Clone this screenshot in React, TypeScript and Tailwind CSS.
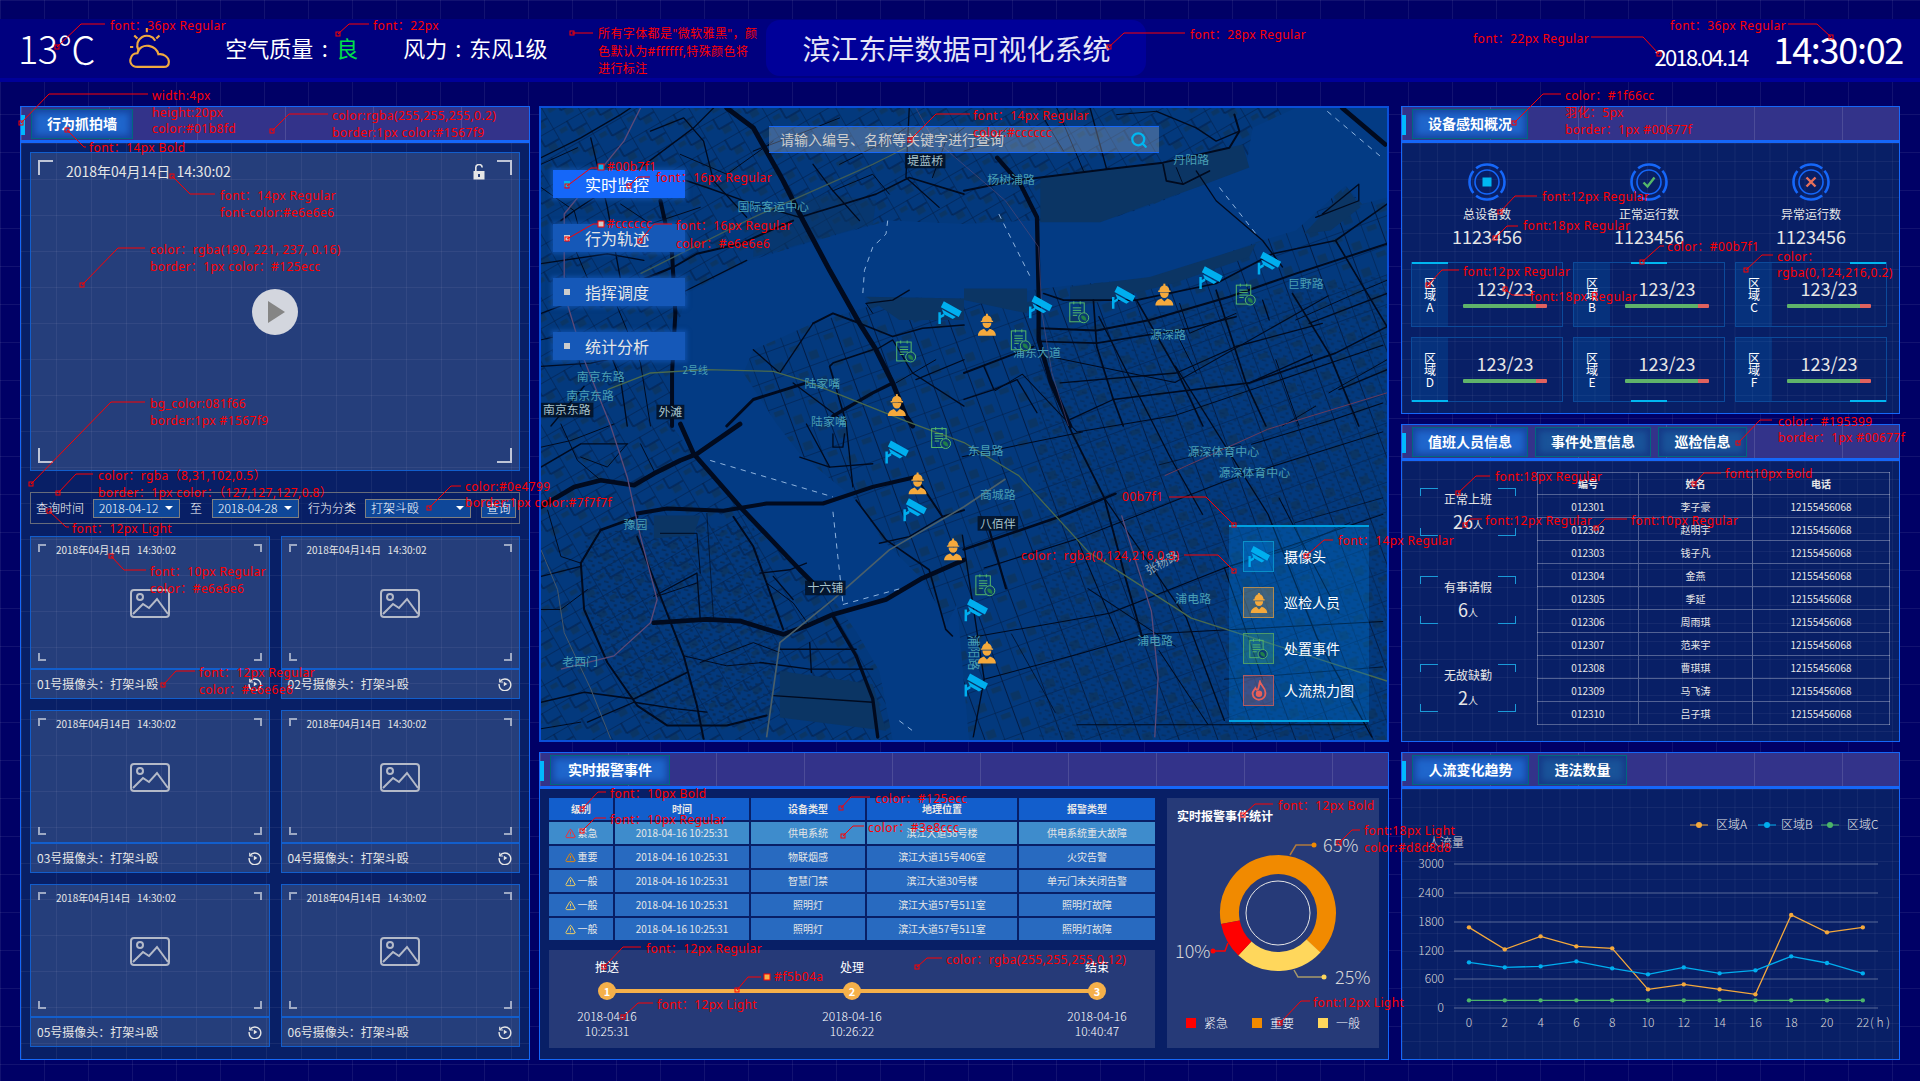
import type { ReactNode } from 'react'
import { Search, TriangleAlert } from 'lucide-react'

// ---- annotation overlay data (page coordinates)
type Note = [number, number, string]
const notes: Note[] = [
  [110, 26, 'font：36px Regular'],
  [373, 26, 'font：22px'],
  [598, 34, '所有字体都是"微软雅黑"，颜'],
  [598, 52, '色默认为#ffffff,特殊颜色将'],
  [598, 69, '进行标注'],
  [152, 96, 'width:4px'],
  [152, 113, 'height:20px'],
  [152, 129, 'color:#01b8fd'],
  [332, 116, 'color:rgba(255,255,255,0.2)'],
  [332, 133, 'border:1px  color:#1567f9'],
  [89, 148, 'font：14px Bold'],
  [220, 196, 'font：14px Regular'],
  [220, 213, 'font-color:#e6e6e6'],
  [150, 250, 'color：rgba(190, 221, 237, 0.16)'],
  [150, 267, 'border：1px  color：#125ecc'],
  [150, 404, 'bg_color:081f66'],
  [150, 421, 'border:1px #1567f9'],
  [98, 476, 'color：rgba（8,31,102,0.5）'],
  [98, 493, 'border：1px color：（127,127,127,0.8）'],
  [72, 529, 'font：12px Light'],
  [465, 487, 'color:#0e4799'],
  [465, 503, 'border:1px color:#7f7f7f'],
  [150, 572, 'font：10px Regular'],
  [150, 589, 'color：#e6e6e6'],
  [199, 673, 'font：12px Regular'],
  [199, 690, 'color：#e6e6e6'],
  [607, 167, '#00b7f1'],
  [656, 178, 'font：16px Regular'],
  [607, 224, '#cccccc'],
  [676, 226, 'font：16px Regular'],
  [676, 244, 'color：#e6e6e6'],
  [973, 116, 'font：14px Regular'],
  [973, 133, 'color:#cccccc'],
  [1190, 35, 'font：28px Regular'],
  [1473, 39, 'font：22px Regular'],
  [1670, 26, 'font：36px Regular'],
  [1565, 96, 'color：#1f66cc'],
  [1565, 113, '羽化：5px'],
  [1565, 130, 'border：1px #00677f'],
  [1542, 197, 'font:12px Regular'],
  [1523, 226, 'font:18px Regular'],
  [1667, 247, 'color：#00b7f1'],
  [1777, 257, 'color：'],
  [1777, 273, 'rgba(0,124,216,0.2)'],
  [1463, 272, 'font:12px Regular'],
  [1530, 297, 'font:18px Regular'],
  [1778, 422, 'color：#195399'],
  [1778, 438, 'border：1px #00677f'],
  [1495, 477, 'font:18px Regular'],
  [1725, 474, 'font:10px Bold'],
  [1485, 521, 'font:12px Regular'],
  [1631, 521, 'font:10px Regular'],
  [1122, 497, '00b7f1'],
  [1021, 556, 'color：rgba(0,124,216,0.3)'],
  [1338, 541, 'font：14px Regular'],
  [610, 794, 'font：10px Bold'],
  [610, 820, 'font：10px Regular'],
  [875, 799, 'color：#125ecc'],
  [868, 828, 'color：#3e8ccc'],
  [646, 949, 'font：12px Regular'],
  [774, 977, '#f5b04a'],
  [946, 960, 'color：rgba(255,255,255,0.12)'],
  [657, 1005, 'font：12px Light'],
  [1278, 806, 'font：12px Bold'],
  [1364, 831, 'font:18px Light'],
  [1364, 848, 'color:#d8d8d8'],
  [1313, 1003, 'font:12px Light'],
]

// first point is the little square, the rest is the leader line
const leaders: number[][] = [
  [57, 47, 81, 24, 105, 24],
  [338, 34, 349, 24, 369, 24],
  [572, 33, 593, 33],
  [21, 123, 49, 94, 148, 94],
  [272, 131, 289, 114, 328, 114],
  [67, 130, 84, 147, 86, 147],
  [172, 176, 190, 194, 215, 194],
  [82, 285, 118, 248, 145, 248],
  [31, 484, 111, 402, 145, 402],
  [58, 493, 76, 474, 93, 474],
  [49, 511, 66, 527, 69, 527],
  [429, 508, 451, 486, 461, 486],
  [111, 556, 124, 570, 146, 570],
  [163, 685, 176, 671, 195, 671],
  [567, 186, 591, 168, 597, 168],
  [629, 186, 638, 177, 650, 177],
  [567, 239, 593, 224, 598, 224],
  [640, 241, 654, 224, 672, 224],
  [910, 140, 936, 114, 970, 114],
  [1109, 47, 1124, 33, 1185, 33],
  [1659, 54, 1643, 37, 1591, 37],
  [1831, 37, 1817, 24, 1788, 24],
  [1514, 123, 1543, 94, 1561, 94],
  [1500, 212, 1515, 196, 1537, 196],
  [1495, 238, 1507, 226, 1518, 226],
  [1642, 262, 1660, 246, 1664, 246],
  [1746, 270, 1762, 255, 1773, 255],
  [1428, 285, 1442, 270, 1459, 270],
  [1505, 289, 1512, 295, 1530, 295],
  [1738, 443, 1760, 420, 1772, 420],
  [1458, 493, 1476, 476, 1490, 476],
  [1465, 525, 1470, 519, 1482, 519],
  [1596, 528, 1605, 519, 1627, 519],
  [1694, 484, 1704, 473, 1721, 473],
  [1234, 525, 1206, 497, 1169, 497],
  [1234, 571, 1218, 555, 1184, 555],
  [1306, 556, 1324, 540, 1333, 540],
  [582, 809, 598, 792, 606, 792],
  [582, 831, 595, 818, 606, 818],
  [841, 808, 851, 797, 870, 797],
  [843, 836, 853, 826, 864, 826],
  [604, 967, 623, 947, 641, 947],
  [737, 990, 748, 977, 761, 977],
  [917, 967, 927, 958, 942, 958],
  [623, 1017, 638, 1003, 653, 1003],
  [1243, 815, 1255, 804, 1273, 804],
  [1339, 843, 1352, 830, 1360, 830],
  [1280, 1023, 1301, 1001, 1310, 1001],
]

function Annotations() {
  return (
    <div className="absolute inset-0 pointer-events-none font-['Noto_Sans','Noto_Sans_CJK_SC',sans-serif] text-[12px] tracking-[0.4px] text-[#ff0000] whitespace-nowrap">
      <svg className="absolute inset-0" width="1920" height="1081" fill="none" stroke="#ff0000">
        {leaders.map((l, i) => {
          const pts = []
          for (let k = 0; k < l.length; k += 2) pts.push(`${l[k]},${l[k + 1]}`)
          return (
            <g key={i}>
              <rect x={l[0] - 2} y={l[1] - 2} width="4" height="4" />
              <polyline points={pts.join(' ')} />
            </g>
          )
        })}
        <rect x="598" y="164" width="6" height="6" fill="#00b7f1" />
        <rect x="598" y="221" width="6" height="6" fill="#cccccc" />
        <rect x="764" y="974" width="6" height="6" fill="#f5b04a" />
      </svg>
      {notes.map(([x, y, t]) => (
        <span key={`${x}-${y}`} className="absolute -translate-y-1/2 leading-none" style={{ left: x, top: y }}>
          {t}
        </span>
      ))}
    </div>
  )
}

// ---- small pieces
function Tab({ w, active, children }: { w: string; active?: boolean; children: ReactNode }) {
  return (
    <div
      className={`${w} h-[30px] flex items-center justify-center border border-[#00677f] text-[14px] font-bold ${
        active
          ? 'bg-[#1f66cc] shadow-[inset_0_0_6px_3px_rgba(20,60,150,0.8)]'
          : 'bg-[#195399] shadow-[inset_0_0_6px_3px_rgba(20,50,130,0.8)]'
      }`}
    >
      {children}
    </div>
  )
}

function Panel({ head, className, fine, children }: { head: ReactNode; className: string; fine?: boolean; children: ReactNode }) {
  return (
    <section className={`${className} flex flex-col border border-[#1567f9] bg-[#081f66]`}>
      <header className="relative h-[36px] shrink-0 flex items-center gap-[7px] pl-[10px] bg-[#33338a] border-b-[3px] border-[#1567f9] bg-[linear-gradient(90deg,rgba(255,255,255,0.12)_1px,transparent_1px)] bg-[size:88px_100%]">
        <span className="absolute left-0 top-[8px] w-[4px] h-[20px] bg-[#01b8fd]" />
        {head}
      </header>
      <div
        className={`flex-1 min-h-0 ${
          fine
            ? 'bg-[linear-gradient(rgba(255,255,255,0.05)_1px,transparent_1px),linear-gradient(90deg,rgba(255,255,255,0.05)_1px,transparent_1px)] bg-[size:17.5px_18px]'
            : ''
        }`}
      >
        {children}
      </div>
    </section>
  )
}

function Corners({ size, color }: { size: string; color: string }) {
  const s = `absolute ${size} ${color}`
  return (
    <>
      <span className={`${s} left-[7px] top-[7px] border-l-2 border-t-2`} />
      <span className={`${s} right-[7px] top-[7px] border-r-2 border-t-2`} />
      <span className={`${s} left-[7px] bottom-[7px] border-l-2 border-b-2`} />
      <span className={`${s} right-[7px] bottom-[7px] border-r-2 border-b-2`} />
    </>
  )
}

function CameraCard({ name }: { name: string }) {
  return (
    <div className="h-[163px] flex flex-col border border-[#125ecc] bg-[rgba(190,221,237,0.16)]">
      <div className="relative flex-1 flex flex-col items-center">
        <Corners size="w-[8px] h-[8px]" color="border-[rgba(255,255,255,0.55)]" />
        <div className="self-start ml-[25px] mt-[5px] text-[10px] leading-[15px] text-[#e6e6e6] whitespace-pre">2018年04月14日   14:30:02</div>
        <svg className="mt-[32px]" width="40" height="30" viewBox="0 0 40 30" fill="none" stroke="#b4bac8" strokeWidth="2">
          <rect x="1" y="1" width="38" height="27" rx="3" />
          <circle cx="10" cy="8" r="3" />
          <path d="M3 25 L13 15 L19 19 L27 10 L38 25" />
        </svg>
      </div>
      <div className="h-[30px] shrink-0 flex items-center justify-between pl-[6px] pr-[7px] border-t-2 border-[#125ecc] text-[12px] text-[#e6e6e6]">
        <span>{name}号摄像头：打架斗殴</span>
        <svg width="14" height="14" viewBox="0 0 24 24" fill="none" stroke="#e6e6e6" strokeWidth="2.4">
          <path d="M3.5 8 A10 10 0 1 1 2 12" />
          <path d="M3 3 V8.5 H8.5" strokeWidth="2" />
          <path d="M10 8 L16 12 L10 16 Z" fill="#e6e6e6" stroke="none" />
        </svg>
      </div>
    </div>
  )
}

function Select({ w, children }: { w: string; children: ReactNode }) {
  return (
    <div className={`${w} h-[19px] flex items-center justify-between pl-[5px] pr-[6px] bg-[#0e4799] border border-[#7f7f7f] text-[12px] font-light`}>
      <span>{children}</span>
      <span className="w-0 h-0 border-x-[4px] border-x-transparent border-t-[4px] border-t-white" />
    </div>
  )
}

function LeftColumn() {
  return (
    <Panel className="w-[510px] h-[954px]" head={<Tab w="w-[102px]" active>行为抓拍墙</Tab>}>
      <div className="px-[9px] pt-[9px] h-full bg-[linear-gradient(rgba(255,255,255,0.06)_1px,transparent_1px),linear-gradient(90deg,rgba(255,255,255,0.06)_1px,transparent_1px)] bg-[size:35px_36px]">
        <div className="relative h-[319px] border border-[#125ecc] bg-[rgba(190,221,237,0.16)] flex items-center justify-center">
          <Corners size="w-[15px] h-[15px]" color="border-[rgba(255,255,255,0.7)]" />
          <div className="absolute left-[35px] top-[8px] text-[14px] leading-[20px] text-[#e6e6e6] whitespace-pre">2018年04月14日  14:30:02</div>
          <svg className="absolute right-[34px] top-[11px]" width="12" height="16" viewBox="0 0 12 16" fill="#e6e6e6">
            <path d="M2 7 V4 a4 4 0 0 1 8 -0.5 H8.4 a2.4 2.4 0 0 0 -4.8 0.5 V7 Z" />
            <path fillRule="evenodd" d="M0.5 7 H11.5 V15.5 H0.5 Z M5 10 V13 H7 V10 Z" />
          </svg>
          <span className="w-[46px] h-[46px] rounded-full bg-[#d3d6de] flex items-center justify-center">
            <span className="ml-[3px] w-0 h-0 border-y-[11px] border-y-transparent border-l-[17px] border-l-[#858585]" />
          </span>
        </div>
        <div className="mt-[21px] h-[32px] flex items-center gap-[9px] pl-[5px] border border-[rgba(127,127,127,0.8)] bg-[rgba(8,31,102,0.5)] text-[12px] font-light">
          <span>查询时间</span>
          <Select w="w-[87px]">2018-04-12</Select>
          <span className="mx-[1px]">至</span>
          <Select w="w-[87px]">2018-04-28</Select>
          <span>行为分类</span>
          <Select w="w-[106px]">打架斗殴</Select>
          <span className="ml-[1px] w-[35px] h-[19px] flex items-center justify-center bg-[#0e4799] border border-[#7f7f7f]">查询</span>
        </div>
        <div className="mt-[12px] grid grid-cols-2 gap-x-[11px] gap-y-[11px]">
          {['01', '02', '03', '04', '05', '06'].map((n) => (
            <CameraCard key={n} name={n} />
          ))}
        </div>
      </div>
    </Panel>
  )
}

// ---- map drawing
const ROAD = '#010a1e'
type Line = [string, number]

const roadsTL: Line[] = [
  ['560,0 640,60 730,220 790,340 870,490 960,650 1010,730 1060,830 1100,930 1120,960', 15],
  ['360,280 395,440 405,620 395,800 395,960', 12],
  ['300,520 400,480 470,440 600,410 760,340', 6],
  ['0,150 120,90 240,20 270,0', 4],
  ['0,170 110,120', 3],
  ['150,90 200,300 240,520', 4],
  ['60,340 100,310 300,180 460,60 520,0', 4],
  ['330,70 430,30 490,100 520,220 620,330', 4],
  ['380,200 500,240 640,290 780,330', 4],
  ['780,330 1010,260 1110,210 1275,260', 5],
  ['820,170 880,250 960,340', 4],
  ['1110,0 1100,210 1200,300', 4],
  ['0,470 200,440 310,460', 4],
  ['0,620 160,560 420,560 620,460', 4],
  ['0,780 150,770 390,720', 4],
  ['820,650 880,620 960,650', 6],
  ['640,730 720,800 820,650', 4],
  ['1000,730 880,770 870,780 920,950', 5],
  ['1275,655 1150,665 1060,690 960,650', 5],
  ['1010,730 1060,700 1120,800 1275,900', 4],
  ['980,590 1060,580 1110,550', 4],
  ['980,590 1000,620', 3],
  ['1130,820 1275,760', 4],
  ['1070,830 1190,760', 3],
  ['880,930 1000,860 1060,830', 10],
  ['560,960 640,880 800,830', 9],
  ['760,830 920,950', 4],
  ['30,960 130,840', 4],
  ['260,960 240,820 200,720', 4],
  ['420,140 560,200 700,100', 3],
  ['240,290 330,350 480,300', 3],
  ['100,420 160,560', 3],
  ['640,130 800,70 900,30', 3],
  ['900,170 1040,100 1100,60', 3],
  ['1180,210 1220,100 1275,60', 3],
  ['880,250 1000,200 1050,260', 3],
  ['0,240 100,310 130,420', 3],
  ['0,700 90,680 120,780', 3],
  ['230,600 300,770 330,960', 3],
]
const roadsTR: Line[] = [
  ['100,150 170,230 220,330 225,560 225,700 260,820 320,960', 13],
  ['0,250 150,220 430,185 600,165 800,120 830,70 815,20', 6],
  ['230,665 400,672 560,640 800,570 1000,500 1275,410', 6],
  ['230,705 400,710 680,665 820,630', 5],
  ['240,560 300,580 520,580 760,530 930,440 1120,400 1275,290', 5],
  ['390,580 400,720 450,880 480,960', 5],
  ['520,580 640,790 720,960', 5],
  ['760,550 850,830 910,960', 5],
  ['990,560 1100,740 1190,960', 5],
  ['1120,400 1275,660', 5],
  ['700,190 760,280 900,400 960,480', 4],
  ['1140,0 1270,110', 14],
  ['290,830 640,800 820,720 1080,650', 4],
  ['0,800 210,720', 6],
  ['450,880 860,830 1120,740 1275,660', 5],
  ['320,940 450,880', 4],
  ['860,830 1050,745', 4],
  ['1040,650 1275,560', 4],
  ['580,10 700,60 760,100 830,70', 4],
  ['600,170 610,220 660,230 740,190', 5],
  ['660,230 640,180', 3],
  ['650,590 680,680 820,620', 3],
  ['900,580 920,640', 4],
  ['60,780 90,850 160,820 220,920', 4],
  ['0,880 90,850', 4],
  ['960,960 1060,900', 3],
  ['1130,850 1275,790', 4],
  ['380,0 430,185', 4],
  ['280,0 360,190', 3],
  ['1060,330 1190,280 1190,230 1080,320', 4],
  ['0,130 90,100 130,60', 3],
  ['460,20 580,10', 3],
  ['240,30 300,130', 3],
  ['1000,640 1180,560 1275,520', 3],
  ['640,680 700,800', 3],
  ['940,760 1010,960', 3],
  ['1100,860 1275,760', 3],
]
const roadsBL: Line[] = [
  ['420,0 460,90 600,250 780,440 830,490', 14],
  ['0,250 100,190 180,170 280,185 340,150 420,110 470,90 600,0', 14],
  ['290,270 380,255 550,262 680,240 850,240 1000,190 1130,160', 12],
  ['340,600 500,590 600,595 730,635 800,610 880,575 1040,530 1150,465 1275,410', 14],
  ['180,320 290,280', 8],
  ['180,320 120,420 130,560 200,720 290,850 380,910 560,910 680,880', 6],
  ['290,340 360,520 430,700 470,850 490,950', 6],
  ['580,280 640,370 680,480 730,620', 6],
  ['880,580 950,700 1000,830 1015,945', 10],
  ['720,680 810,680 950,680', 4],
  ['660,720 810,740 1000,740', 4],
  ['700,820 1000,840', 4],
  ['810,660 815,750', 4],
  ['1130,160 1210,280 1275,260', 6],
  ['950,230 1040,350 1170,440 1220,620 1240,640', 5],
  ['1020,360 1110,340 1210,280', 4],
  ['780,100 870,130 1000,120', 4],
  ['870,130 800,0', 4],
  ['920,0 940,190', 4],
  ['880,30 880,70 910,70 915,30', 4],
  ['0,460 120,430', 4],
  ['0,130 120,60 260,60', 4],
  ['0,70 90,50 220,0', 3],
  ['60,0 110,110 180,170', 3],
  ['0,560 60,560 140,500', 3],
  ['340,520 470,450 480,590', 4],
  ['660,450 750,440 800,420', 4],
  ['470,480 350,520', 3],
  ['0,840 130,810 280,830 440,750', 5],
  ['140,900 280,840 410,860 500,870', 4],
  ['760,530 700,460', 4],
  ['0,920 120,900', 3],
  ['120,100 200,130 260,60', 3],
  ['300,60 340,140', 3],
  ['20,260 60,400 120,420', 3],
  ['360,330 470,330 480,450', 3],
  ['480,720 640,660 720,690', 3],
  ['430,700 560,730 670,720', 3],
  ['500,270 520,590', 2],
  ['680,480 760,540 810,610', 3],
]
// lower right quarter, drawn in the wider crop's coordinates
const roadsBR: Line[] = [
  ['793,1085 970,1005 1070,950', 6],
  ['930,560 950,680 990,800 1050,960 1090,1160 1120,1300', 3.5],
  ['800,1300 1060,1240 1270,1130 1560,1000', 2.5],
  ['830,1130 1000,1060 1270,920 1560,800', 2.5],
  ['830,1400 1000,1340 1130,1290 1560,1260', 2.5],
  ['1050,960 1200,1250 1270,1500', 2.5],
  ['1000,800 1180,760 1560,590', 2.5],
  ['1180,640 1350,1000 1440,1300 1540,1540', 2.5],
  ['960,620 1180,680 1460,470', 2.5],
  ['1040,520 1170,860 1230,1000', 2.5],
  ['790,1050 830,1400 810,1540', 2.5],
  ['840,1040 870,1180', 4],
  ['1000,1510 1530,1510', 2.5],
  ['1320,830 1470,770 1560,730', 2.5],
  ['1370,960 1480,1240', 2],
  ['1020,1180 1180,1320', 2],
  ['1150,1330 1240,1510', 2],
  ['1270,1130 1340,1400', 2],
  ['790,860 1010,800', 2.5],
  ['1000,1060 1080,1310', 2],
  ['850,700 900,660 1000,800', 2],
  ['1270,1130 1400,1080 1500,1020', 1.5],
  ['1150,880 1300,830', 1.5],
  ['1400,1020 1560,960', 1.5],
  ['880,1290 960,1480', 1.5],
  ['1270,1400 1560,1370', 1.5],
]

function Polys({ lines, color = ROAD }: { lines: Line[]; color?: string }) {
  return (
    <>
      {lines.map(([p, w], i) => (
        <polyline key={i} points={p} fill="none" stroke={color} strokeWidth={w} strokeLinejoin="round" strokeLinecap="round" />
      ))}
    </>
  )
}

function CameraIcon() {
  return (
    <g fill="#00aeef">
      <path d="M6 0 L24 10 L21 16 L3 6 Z" />
      <path d="M4 8 L18 16 L15 18 L6 13 Z" />
      <path d="M0.5 11 H3 V14 L6.5 12 V15 L3 17 V23 H0.5 Z" />
    </g>
  )
}
function WorkerIcon() {
  return (
    <g fill="#f5a93c">
      <path d="M11 1 H13 V4 H11 Z" />
      <path d="M7 8 A5 5.5 0 0 1 17 8 H18.2 V9.3 H5.8 V8 Z" />
      <path d="M7.5 10 H16.5 A4.5 5.4 0 0 1 7.5 10 Z" />
      <path d="M3 23 C3 19 6 17 9 16 L12 19 L15 16 C18 17 21 19 21 23 Z" />
    </g>
  )
}
function DocIcon() {
  return (
    <g fill="none" stroke="#55b86a" strokeWidth="1">
      <rect x="2" y="2.5" width="14.5" height="19" />
      <path d="M6 1 V4 M12.5 1 V4 M5 7.5 H13.5 M5 10 H13.5 M5 12.5 H13.5 M5 15 H9.5" />
      <circle cx="16" cy="17.5" r="5" fill="#0b3a70" />
      <path d="M13.5 15.5 C16 14.5 19 17 18.5 20.5 C15.5 20.5 13 18.5 13.5 15.5 Z" fill="#1f7f4a" stroke="none" />
    </g>
  )
}
function HeatIcon() {
  return (
    <g fill="none" stroke="#e8605a" strokeWidth="2">
      <path d="M13 2 C14 6 19 8 19 14 A7 7 0 0 1 5 15 C5 12 7 11 8 9 C9 11 10 11 11 10 C12 8 12 5 13 2 Z" />
      <circle cx="12" cy="15" r="2.5" fill="#e8605a" />
    </g>
  )
}

const cams = [[767, 512], [933, 498], [1085, 475], [1245, 427], [1352, 392], [670, 850], [703, 990], [815, 1233], [815, 1415]]
const workers = [[835, 540], [1160, 467], [670, 735], [708, 925], [773, 1085], [835, 1335]]
const docs = [[1005, 510], [898, 578], [688, 605], [1310, 467], [752, 815], [833, 1172]]
const toMap = (x: number, y: number) => `translate(${(x / 1.823 - 10) * 3 - 36} ${(y / 2.41 - 6) * 3 - 36}) scale(3)`

type MapLabel = [number, number, string, boolean?]
const labels: MapLabel[] = [
  [700, 298, '国际客运中心'], [180, 812, '南京东路'], [148, 868, '南京东路'], [78, 912, '南京东路', true], [390, 918, '外滩', true],
  [848, 833, '陆家嘴'], [868, 948, '陆家嘴'], [1158, 160, '堤蓝桥', true],
  [1417, 215, '杨树浦路'], [1960, 155, '丹阳路'], [2305, 530, '巨野路'], [1890, 685, '源深路'], [1495, 740, '浦东大道'],
  [285, 1259, '豫园'], [857, 1449, '十六铺', true], [118, 1671, '老西门'],
  [1340, 1036, '东昌路'], [2057, 1037, '源深体育中心'], [2150, 1100, '源深体育中心'], [1377, 1167, '商城路'], [1377, 1254, '八佰伴', true],
  [1966, 1482, '浦电路'], [1851, 1609, '浦电路'],
]

function MapCanvas() {
  return (
    <svg className="absolute inset-0 w-full h-full" viewBox="0 0 2550 1908" preserveAspectRatio="none">
      <defs>
        <pattern id="streets" width="96" height="72" patternUnits="userSpaceOnUse" patternTransform="rotate(-30)">
          <rect width="96" height="72" fill="#03397d" />
          <rect x="14" y="12" width="24" height="14" fill="#0a3565" />
          <rect x="56" y="38" width="26" height="20" fill="#0a3565" />
          <path d="M0 0 H96 M0 0 V72 M48 0 V36 M48 36 H96" stroke="#031c44" strokeWidth="3" fill="none" />
        </pattern>
        <pattern id="pudong" width="110" height="84" patternUnits="userSpaceOnUse" patternTransform="rotate(-20)">
          <rect width="110" height="84" fill="#03397d" />
          <rect x="14" y="12" width="30" height="16" fill="#0a3565" />
          <rect x="64" y="44" width="28" height="26" fill="#0a3565" />
          <path d="M0 0 H110 M0 0 V84 M55 0 V84" stroke="#031c44" strokeWidth="3" fill="none" />
        </pattern>
        <pattern id="specks" width="30" height="26" patternUnits="userSpaceOnUse" patternTransform="rotate(12)">
          <rect x="3" y="4" width="14" height="5" fill="#072c5c" />
          <rect x="17" y="15" width="9" height="7" fill="#072c5c" />
        </pattern>
      </defs>
      <rect width="2550" height="1908" fill="#033b84" />
      {/* west bank */}
      <path
        fill="url(#streets)"
        d="M0 0 L2275 0 L2145 60 L2125 180 L1975 240 L1835 295 L1685 345 L1475 340 L1275 350 L1050 340 L830 400 L630 460 L440 560 L400 700 L395 960 L470 1064 L600 1204 L780 1394 L880 1484 L950 1580 L1020 1700 L1060 1908 L0 1908 Z"
      />
      {/* east bank */}
      <path
        fill="url(#pudong)"
        d="M975 570 L1275 575 L1595 535 L1875 510 L2155 405 L2275 370 L2425 235 L2475 290 L2550 270 L2550 1908 L1290 1908 L1254 1500 L1225 1554 L1150 1424 L1030 1304 L950 1184 L780 1044 L710 954 L610 800 L640 730 L820 650 L985 600 Z"
      />
      <path fill="url(#specks)" d="M130 1280 L640 1260 L720 1560 L680 1860 L300 1860 L140 1520 Z" />
      <path fill="url(#specks)" d="M1500 680 L2550 500 L2550 1900 L1500 1900 Z" opacity="0.7" />
      <g fill="#0b3564">
        <path d="M1505 210 L1865 165 L2115 110 L2135 180 L1975 240 L1685 345 L1505 345 Z" />
        <path d="M640 450 L1000 350 L1010 280 L860 260 L640 330 Z" opacity="0.5" />
        <path d="M1595 540 L1835 510 L2155 410 L2135 450 L1905 530 L1665 590 L1595 580 Z" />
        <path d="M980 570 L1275 575 L1275 640 L1080 640 Z" />
        <path d="M1275 545 L1465 545 L1465 620 L1275 580 Z" />
        <path d="M2300 380 L2430 240 L2470 300 L2380 370 Z" />
        <path d="M340 1230 L480 1230 L460 1290 L340 1300 Z" />
        <path d="M720 1700 L1000 1740 L1040 1880 L720 1840 Z" />
      </g>
      <g>
        <Polys lines={roadsTL} />
        <g transform="translate(1275 0)"><Polys lines={roadsTR} /></g>
        <g transform="translate(0 954)"><Polys lines={roadsBL} /></g>
        <g transform="translate(-30 -18) scale(1.6456 1.2448)"><Polys lines={roadsBR} /></g>
      </g>
      {/* metro lines */}
      <g fill="none" strokeWidth="4" strokeLinejoin="round">
        <polyline stroke="#4a6a4e" points="200,850 330,800 500,790 700,795 800,825 1000,905 1100,945 1275,1010 1440,1110 1650,1340 1960,1540 2550,1730" />
        <polyline stroke="#3e5c58" points="300,500 640,330 1000,170 1100,120" />
        <polyline stroke="#4a5f6a" strokeWidth="5" points="680,1900 720,1614 880,1484 1050,1334 1275,1204 1400,1120" />
        <polyline stroke="#5c4a78" points="300,0 250,100 70,320 70,560 130,760 210,960 260,1114 300,1294 350,1484 330,1554 220,1654 60,1694" />
        <polyline stroke="#46586a" strokeWidth="3" points="0,1334 50,1454 70,1584 150,1754 210,1904" />
        <polyline stroke="#5c4a78" points="1750,1230 1840,1520 1860,1720 1850,1900" />
        <polyline stroke="#6a3a5a" strokeWidth="3" points="1880,1110 2190,970 2550,860" />
        <polyline stroke="#5c4a78" strokeWidth="3" points="1130,0 1180,90 1400,280 1500,420 1510,620 1540,800 1590,960" opacity="0.6" />
      </g>
      {/* ferry lines over the river */}
      <g fill="none" stroke="#8fb3de" strokeWidth="3" strokeDasharray="16 16">
        <polyline points="1045,340 1040,380 1000,420 975,490 970,560" />
        <polyline points="510,1064 880,1174" />
        <polyline points="880,1219 910,1494" />
        <polyline points="910,1499 1090,1449" />
        <polyline points="1380,320 1480,520" />
        <polyline points="2045,240 2155,380" />
        <polyline points="2370,10 2535,150" />
        <polyline points="1080,1850 1120,1880" />
      </g>
      {labels.map(([x, y, t, dark]) => (
        <g key={`${x}${y}`}>
          {dark && <rect x={x - t.length * 19 - 4} y={y - 22} width={t.length * 38 + 8} height="44" fill="#041022" opacity="0.85" />}
          <text x={x} y={y + 13} textAnchor="middle" fontSize="36" fill={dark ? '#a8c4cc' : '#4a9fb4'}>{t}</text>
        </g>
      ))}
      <text x="465" y="802" textAnchor="middle" fontSize="30" fill="#4a9fb4">2号线</text>
      <text transform="translate(1830 1410) rotate(-28)" fontSize="36" fill="#8fa8bc">张杨路</text>
      <text transform="translate(1290 1590) rotate(90)" fontSize="36" fill="#4a9fb4">浦阳路</text>
      {cams.map(([x, y], i) => <g key={i} transform={toMap(x, y)}><CameraIcon /></g>)}
      {workers.map(([x, y], i) => <g key={i} transform={toMap(x, y)}><WorkerIcon /></g>)}
      {docs.map(([x, y], i) => <g key={i} transform={toMap(x, y)}><DocIcon /></g>)}
    </svg>
  )
}

const menu = ['实时监控', '行为轨迹', '指挥调度', '统计分析']
const legend: { label: string; box: string; icon: ReactNode }[] = [
  { label: '摄像头', box: 'border-[#0a8fc8] bg-[rgba(0,124,216,0.4)]', icon: <CameraIcon /> },
  { label: '巡检人员', box: 'border-[#b08a50] bg-[rgba(245,169,60,0.25)]', icon: <WorkerIcon /> },
  { label: '处置事件', box: 'border-[#4c9a6a] bg-[rgba(85,184,106,0.25)]', icon: <DocIcon /> },
  { label: '人流热力图', box: 'border-[#b05a60] bg-[rgba(232,96,90,0.25)]', icon: <HeatIcon /> },
]

function MapPanel() {
  return (
    <section className="relative h-[636px] border-2 border-[#0a4fd8] overflow-hidden">
      <MapCanvas />
      <div className="absolute left-[12px] top-[62px] flex flex-col gap-[26px]">
        {menu.map((m, i) => (
          <div
            key={m}
            className={`w-[132px] h-[28px] flex items-center text-[16px] shadow-[0_0_4px_2px_rgba(21,90,190,0.6)] ${
              i === 0 ? 'bg-[#1567f9] text-white' : 'bg-[#1558b8] text-[#e6e6e6]'
            }`}
          >
            <span className={`ml-[11px] mr-[15px] w-[6px] h-[6px] ${i === 0 ? 'bg-[#00b7f1]' : 'bg-[#cccccc]'}`} />
            {m}
          </div>
        ))}
      </div>
      <div className="absolute left-[228px] top-[18px] w-[390px] h-[27px] flex items-center justify-between px-[11px] border-y border-[#1567f9] bg-[rgba(190,200,215,0.3)] text-[14px] text-[#cccccc]">
        <span>请输入编号、名称等关键字进行查询</span>
        <Search size={18} strokeWidth={3} color="#00b7f1" />
      </div>
      <div className="absolute left-[688px] top-[417px] w-[140px] h-[197px] pl-[14px] pt-[14px] border-y-2 border-[#00a0e0] bg-[rgba(0,124,216,0.3)] text-[14px]">
        {legend.map((l, i) => (
          <div key={l.label} className={`flex items-center gap-[10px] ${i === 0 ? '' : i === 3 ? 'mt-[11px]' : 'mt-[15px]'}`}>
            <span className={`w-[31px] h-[31px] flex items-center justify-center border ${l.box}`}>
              <svg width="22" height="22" viewBox="0 0 24 24">{l.icon}</svg>
            </span>
            <span className="whitespace-nowrap">{l.label}</span>
          </div>
        ))}
      </div>
    </section>
  )
}

// ---- alarms
const alarmRows = [
  ['紧急', '2018-04-16 10:25:31', '供电系统', '滨江大道58号楼', '供电系统重大故障'],
  ['重要', '2018-04-16 10:25:31', '物联烟感', '滨江大道15号406室', '火灾告警'],
  ['一般', '2018-04-16 10:25:31', '智慧门禁', '滨江大道30号楼', '单元门未关闭告警'],
  ['一般', '2018-04-16 10:25:31', '照明灯', '滨江大道57号511室', '照明灯故障'],
  ['一般', '2018-04-16 10:25:31', '照明灯', '滨江大道57号511室', '照明灯故障'],
]
const alarmColor: Record<string, string> = { 紧急: '#ff2a2a', 重要: '#f18a00', 一般: '#ffd75c' }
const steps = [
  { n: 1, name: '推送', t: '10:25:31' },
  { n: 2, name: '处理', t: '10:26:22' },
  { n: 3, name: '结束', t: '10:40:47' },
]

function AlarmTable() {
  return (
    <div className="grid grid-cols-[64px_134px_114px_150px_136px] gap-[2px] text-[10px] text-center leading-[22px]">
      {['级别', '时间', '设备类型', '地理位置', '报警类型'].map((h) => (
        <div key={h} className="h-[22px] bg-[#125ecc] font-bold text-[#e6e6e6]">{h}</div>
      ))}
      {alarmRows.map((r, i) =>
        r.map((c, j) => (
          <div key={j} className={`h-[22px] flex items-center justify-center gap-[2px] text-[#e6e6e6] ${i === 0 ? 'bg-[#3e8ccc]' : 'bg-[#286ac0]'}`}>
            {j === 0 && <TriangleAlert size={11} color={alarmColor[c]} />}
            {c}
          </div>
        )),
      )}
    </div>
  )
}

function Timeline() {
  return (
    <div className="relative mt-[10px] h-[98px] flex justify-between bg-[rgba(255,255,255,0.12)]">
      <span className="absolute left-[58px] right-[58px] top-[39px] h-[4px] bg-[#f5b04a]" />
      {steps.map((s) => (
        <div key={s.n} className="relative w-[116px] flex flex-col items-center pt-[9px] text-[12px]">
          <span className="leading-[16px]">{s.name}</span>
          <span className="mt-[7px] w-[18px] h-[18px] rounded-full bg-[#f5b04a] flex items-center justify-center text-[11px] font-bold leading-none">{s.n}</span>
          <span className="mt-[8px] font-light leading-[15px]">2018-04-16</span>
          <span className="font-light leading-[15px]">{s.t}</span>
        </div>
      ))}
    </div>
  )
}

function DonutStats() {
  const C = 2 * Math.PI * 48.5
  const seg = (pct: number, rot: number, color: string) => (
    <circle
      cx="111"
      cy="115"
      r="48.5"
      fill="none"
      stroke={color}
      strokeWidth="19"
      strokeDasharray={`${C * pct} ${C}`}
      transform={`rotate(${rot - 90} 111 115)`}
    />
  )
  return (
    <div className="relative w-[212px] h-[250px] ml-[12px] bg-[rgba(255,255,255,0.12)] flex flex-col justify-between pl-[10px]">
      <div className="mt-[9px] text-[12px] font-bold leading-[17px]">实时报警事件统计</div>
      <svg className="absolute left-0 top-0" width="212" height="250" viewBox="0 0 212 250">
        {seg(0.65, 259, '#f18a00')}
        {seg(0.25, 133, '#ffd75c')}
        {seg(0.1, 223, '#ff0000')}
        <circle cx="111" cy="115" r="32" fill="none" stroke="#e6e6e6" strokeWidth="1" />
        <g fill="none" strokeWidth="1.5">
          <polyline points="123,57 129,47 146,47" stroke="#b07a3c" />
          <polyline points="127,172 131,179 156,179" stroke="#a89a6a" />
          <polyline points="61,145 58,153 46,153" stroke="#ff0000" />
        </g>
        <circle cx="147" cy="47" r="2.5" fill="#f18a00" />
        <circle cx="157" cy="179" r="2.5" fill="#ffd75c" />
        <circle cx="46" cy="153" r="2.5" fill="#ff0000" />
        <g fontSize="18" fontWeight="300" fill="#d8d8d8">
          <text x="156" y="54">65%</text>
          <text x="168" y="186">25%</text>
          <text x="8" y="160">10%</text>
        </g>
      </svg>
      <div className="relative mb-[17px] ml-[9px] flex gap-[24px] text-[12px] font-light leading-[16px]">
        {[['紧急', 'bg-[#ff0000]'], ['重要', 'bg-[#f18a00]'], ['一般', 'bg-[#ffd75c]']].map(([t, c]) => (
          <span key={t} className="flex items-center gap-[8px]">
            <span className={`w-[10px] h-[10px] ${c}`} />
            {t}
          </span>
        ))}
      </div>
    </div>
  )
}

// ---- right column
function StatusIcon({ kind }: { kind: 'total' | 'ok' | 'bad' }) {
  return (
    <svg width="38" height="38" viewBox="0 0 38 38" fill="none">
      <circle cx="19" cy="19" r="17.5" stroke="#1567f9" strokeWidth="2.6" strokeDasharray="23.5 4" transform="rotate(-40 19 19)" />
      <circle cx="19" cy="19" r="12" stroke="#1567f9" strokeWidth="1.6" />
      {kind === 'total' && <rect x="14.5" y="14.5" width="9" height="9" fill="#00b7f1" />}
      {kind === 'ok' && <path d="M13.5 19.5 L17.5 23.5 L24.5 14.5" stroke="#55b86a" strokeWidth="2.4" />}
      {kind === 'bad' && <path d="M14.5 14.5 L23.5 23.5 M23.5 14.5 L14.5 23.5" stroke="#e8705a" strokeWidth="2.4" />}
    </svg>
  )
}

function ZoneBox({ zone, index }: { zone: string; index: number }) {
  const accent = ['left-0 w-[36px]', 'left-[57px] w-[36px]', 'right-0 w-[36px]'][index % 3]
  return (
    <div className="relative h-[65px] flex border border-[#0c4a9a]">
      <span className={`absolute ${accent} ${index < 3 ? 'top-[-1px]' : 'bottom-[-1px]'} h-[2px] bg-[#00b7f1]`} />
      <div className="w-[36px] shrink-0 bg-[rgba(0,124,216,0.2)] flex flex-col items-center justify-center text-[12px] leading-[12px]">
        <span>区</span>
        <span>域</span>
        <span>{zone}</span>
      </div>
      <div className="flex-1 flex flex-col items-center pt-[13px]">
        <span className="text-[18px] leading-[24px] text-[#e6e6e6]">123/23</span>
        <div className="mt-[4px] w-[84px] h-[4px] flex rounded-[1px] overflow-hidden">
          <span className="w-[73px] bg-[#5fb36a]" />
          <span className="flex-1 bg-[#e0625e]" />
        </div>
      </div>
    </div>
  )
}

function DevicePanel() {
  return (
    <Panel fine className="h-[308px]" head={<Tab w="w-[116px]" active>设备感知概况</Tab>}>
      <div className="pl-[9px] pr-[12px] pt-[20px]">
        <div className="grid grid-cols-3 gap-x-[10px] text-center">
          {([['总设备数', 'total'], ['正常运行数', 'ok'], ['异常运行数', 'bad']] as const).map(([t, k]) => (
            <div key={t} className="flex flex-col items-center">
              <StatusIcon kind={k} />
              <span className="mt-[5px] text-[12px] leading-[16px] text-[#e6e6e6]">{t}</span>
              <span className="mt-[2px] text-[18px] leading-[24px] text-[#e6e6e6]">1123456</span>
            </div>
          ))}
        </div>
        <div className="mt-[14px] grid grid-cols-3 gap-x-[10px] gap-y-[10px]">
          {['A', 'B', 'C', 'D', 'E', 'F'].map((z, i) => (
            <ZoneBox key={z} zone={z} index={i} />
          ))}
        </div>
      </div>
    </Panel>
  )
}

const people = ['李子豪', '赵明宇', '钱子凡', '金燕', '季延', '周雨琪', '范来宇', '曹琪琪', '马飞涛', '吕子琪']
const duty = [['正常上班', '26'], ['有事请假', '6'], ['无故缺勤', '2']]

function DutyPanel() {
  return (
    <Panel
      fine
      className="h-[318px]"
      head={
        <>
          <Tab w="w-[116px]" active>值班人员信息</Tab>
          <Tab w="w-[116px]">事件处置信息</Tab>
          <Tab w="w-[89px]">巡检信息</Tab>
        </>
      }
    >
      <div className="flex items-start pl-[18px]">
        <div className="w-[96px] mt-[27px] flex flex-col gap-[40px]">
          {duty.map(([t, n]) => (
            <div key={t} className="relative h-[48px] pt-[4px] flex flex-col items-center justify-center">
              <span className="absolute left-0 top-0 w-[18px] h-[8px] border-l border-t border-[#1a9ad8]" />
              <span className="absolute right-0 top-0 w-[18px] h-[8px] border-r border-t border-[#1a9ad8]" />
              <span className="absolute left-0 bottom-0 w-[18px] h-[8px] border-l border-b border-[#1a9ad8]" />
              <span className="absolute right-0 bottom-0 w-[18px] h-[8px] border-r border-b border-[#1a9ad8]" />
              <span className="text-[12px] leading-[16px] text-[#e6e6e6]">{t}</span>
              <span className="mt-[2px] text-[18px] leading-[24px] text-[#e6e6e6]">
                {n}
                <span className="text-[10px]">人</span>
              </span>
            </div>
          ))}
        </div>
        <table className="ml-[21px] mt-[11px] w-[352px] table-fixed border-collapse text-[10px] text-[#e6e6e6] text-center">
          <colgroup>
            <col className="w-[101px]" />
            <col className="w-[114px]" />
            <col className="w-[137px]" />
          </colgroup>
          <thead>
            <tr className="h-[22px] border border-[rgba(255,255,255,0.3)]">
              <th className="font-bold border-r border-[rgba(255,255,255,0.3)]">编号</th>
              <th className="font-bold border-r border-[rgba(255,255,255,0.3)]">姓名</th>
              <th className="font-bold">电话</th>
            </tr>
          </thead>
          <tbody>
            {people.map((p, i) => (
              <tr key={p} className="h-[23px] border border-[rgba(255,255,255,0.3)]">
                <td className="border-r border-[rgba(255,255,255,0.3)]">{`0123${String(i + 1).padStart(2, '0')}`}</td>
                <td className="border-r border-[rgba(255,255,255,0.3)]">{p}</td>
                <td>12155456068</td>
              </tr>
            ))}
          </tbody>
        </table>
      </div>
    </Panel>
  )
}

const seriesA = [532, 598, 559, 589, 595, 718, 703, 718, 733, 495, 547, 532]
const seriesB = [637, 652, 649, 634, 655, 673, 652, 670, 661, 619, 639, 670]
const seriesC = Array(12).fill(751) as number[]
const gx = (i: number) => 67 + i * 35.8
const gy = (v: number) => v / 3 - 40

function Series({ data, color }: { data: number[]; color: string }) {
  return (
    <>
      <polyline points={data.map((v, i) => `${gx(i)},${gy(v)}`).join(' ')} fill="none" stroke={color} strokeWidth="1.3" />
      {data.map((v, i) => <circle key={i} cx={gx(i)} cy={gy(v)} r="2.2" fill={color} />)}
    </>
  )
}

function FlowPanel() {
  return (
    <Panel
      fine
      className="h-[308px]"
      head={
        <>
          <Tab w="w-[117px]" active>人流变化趋势</Tab>
          <span className="ml-[2px]"><Tab w="w-[89px]">违法数量</Tab></span>
        </>
      }
    >
      <svg className="block" width="497" height="269" viewBox="0 -1 497 269">
        <g stroke="rgba(255,255,255,0.32)" strokeWidth="1">
          {[74, 103, 132, 161, 189, 218].map((y) => <line key={y} x1="52" x2="476" y1={y} y2={y} />)}
        </g>
        <g fontSize="12" fontWeight="300" fill="#d8d8d8" textAnchor="end">
          {[3000, 2400, 1800, 1200, 600, 0].map((v, i) => (
            <text key={v} x="42" y={[78, 107, 136, 165, 193, 222][i]}>{v}</text>
          ))}
        </g>
        <g fontSize="12" fontWeight="300" fill="#d8d8d8" textAnchor="middle">
          {[0, 2, 4, 6, 8, 10, 12, 14, 16, 18, 20, 22].map((v, i) => (
            <text key={v} x={gx(i)} y="237">{v}</text>
          ))}
        </g>
        <text x="468" y="237" fontSize="12" fontWeight="300" fill="#d8d8d8">( h )</text>
        <text x="26" y="57" fontSize="12" fontWeight="300" fill="#d8d8d8">人流量</text>
        <Series data={seriesA} color="#f5a93c" />
        <Series data={seriesB} color="#00aeef" />
        <Series data={seriesC} color="#4cb56a" />
        <g fontSize="12" fontWeight="300" fill="#e6e6e6">
          {[[297, 314, '区域A', '#f5a93c'], [365, 379, '区域B', '#00aeef'], [428, 445, '区域C', '#4cb56a']].map(([m, x, t, c]) => (
            <g key={t as string}>
              <line x1={(m as number) - 9} x2={(m as number) + 9} y1="35" y2="35" stroke={c as string} />
              <circle cx={m as number} cy="35" r="3" fill={c as string} />
              <text x={x as number} y="39">{t as string}</text>
            </g>
          ))}
        </g>
      </svg>
    </Panel>
  )
}

export default function App() {
  return (
    <div className="relative w-[1920px] h-[1081px] overflow-hidden text-white font-['Noto_Sans_CJK_SC','Noto_Sans',sans-serif] bg-[#000066] bg-[linear-gradient(rgba(255,255,255,0.07)_1px,transparent_1px),linear-gradient(90deg,rgba(255,255,255,0.07)_1px,transparent_1px)] bg-[size:44px_38px]">
      <div className="pt-[19px]">
        <header className="h-[63px] flex items-center bg-[#00007f] border-b-[4px] border-[#000099] pb-[2px]">
          <span className="ml-[18px] text-[38px] font-light tracking-[-0.5px] leading-none">13℃</span>
          <svg className="ml-[34px]" width="42" height="42" viewBox="0 0 40 40" fill="none" stroke="#f0a93f" strokeWidth="2">
            <path d="M9 22 A9 9 0 0 1 25 13" />
            <path d="M17 1 V5 M5 8 L8 11 M1 19 H4 M29 8 L26 11" />
            <path d="M8 38 C2 38 0 33 2 29 C3 26 6 25 8 25 C9 20 14 17 19 18 C24 19 27 22 28 26 C33 25 38 29 38 33 C38 36 36 38 33 38 Z" />
          </svg>
          <span className="ml-[54px] text-[22px] flex items-center">
            空气质量<span className="w-[23px] text-center">:</span><span className="text-[#00e04a]">良</span>
          </span>
          <span className="ml-[45px] text-[22px] flex items-center">
            风力<span className="w-[22px] text-center">:</span>东风1级
          </span>
          <div className="ml-[219px] w-[380px] h-[56px] flex items-center justify-center rounded-[14px] bg-[#000099] text-[28px] text-[#e6e6f6]">
            滨江东岸数据可视化系统
          </div>
          <span className="ml-auto self-end mb-[6px] text-[22px] tracking-[-1.7px] leading-[28px]">2018.04.14</span>
          <span className="ml-[26px] mr-[17px] text-[36px] tracking-[-1.3px] leading-none">14:30:02</span>
        </header>
      </div>
      <main className="mt-[24px] px-[20px] flex items-start">
        <LeftColumn />
        <div className="ml-[9px] w-[850px] flex flex-col gap-[10px]">
          <MapPanel />
          <Panel className="h-[308px]" head={<Tab w="w-[120px]" active>实时报警事件</Tab>}>
            <div className="flex pl-[9px] pt-[9px]">
              <div className="w-[606px]">
                <AlarmTable />
                <Timeline />
              </div>
              <DonutStats />
            </div>
          </Panel>
        </div>
        <div className="ml-[12px] w-[499px] flex flex-col gap-[10px]">
          <DevicePanel />
          <DutyPanel />
          <FlowPanel />
        </div>
      </main>
      <Annotations />
    </div>
  )
}
